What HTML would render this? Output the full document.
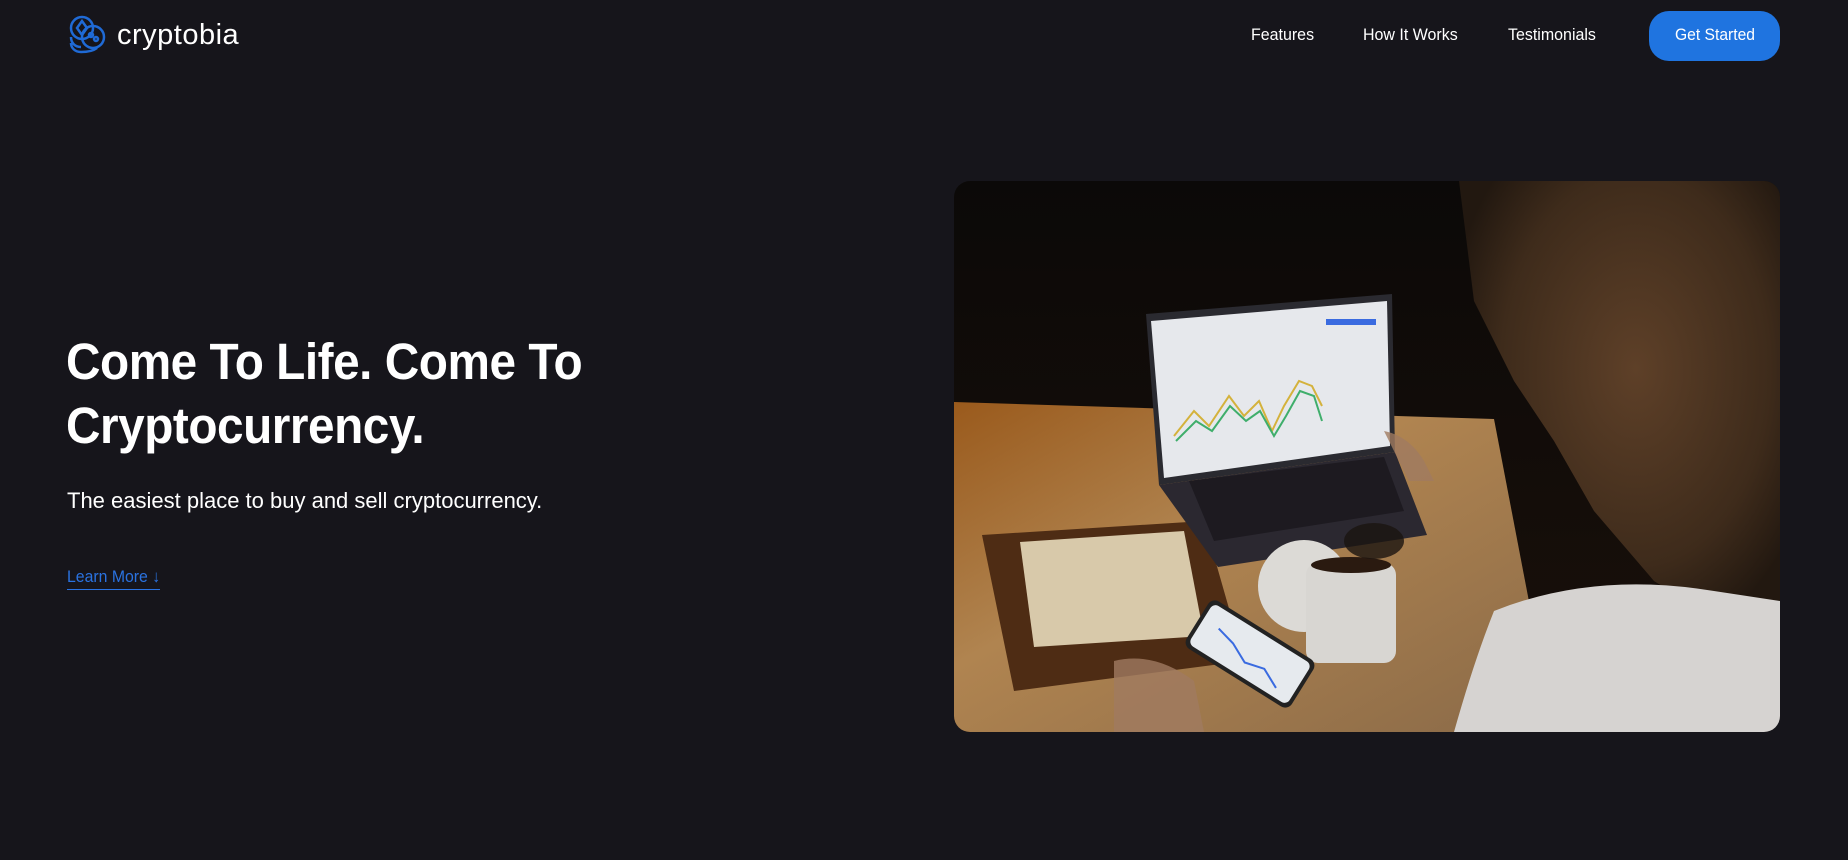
<!DOCTYPE html>
<html><head><meta charset="utf-8"><style>
*{margin:0;padding:0;box-sizing:border-box}
body{width:1848px;height:860px;background:#16151b;font-family:"Liberation Sans",Roboto,sans-serif;color:#fff;position:relative;overflow:hidden}
.logo{position:absolute;left:67px;top:15px;display:flex;align-items:center}
.logo span{font-size:29px;margin-left:8px;letter-spacing:0.5px;color:#fff}
.n{position:absolute;top:25px;font-size:17px;color:#fff;white-space:nowrap;transform-origin:left top;transform:scaleX(0.94)}
.btn{position:absolute;left:1649px;top:11px;width:131px;height:50px;border-radius:20px;background:#1f74e0}
h1{position:absolute;left:66px;top:330px;font-size:51px;line-height:64px;font-weight:bold;letter-spacing:-0.5px;white-space:nowrap;transform-origin:left top;transform:scaleX(0.936)}
.sub{position:absolute;left:67px;top:488px;font-size:22px;white-space:nowrap}
.lm{position:absolute;left:67px;top:567px;font-size:17px;color:#2a72e0;border-bottom:1.5px solid #2a72e0;padding-bottom:2px;white-space:nowrap;transform-origin:left top;transform:scaleX(0.93)}
.img{position:absolute;left:954px;top:181px;width:826px;height:551px;border-radius:16px;overflow:hidden}
</style></head><body>
<div class="logo">
<svg width="42" height="40" viewBox="0 0 42 40" fill="none" stroke="#1f6ad6" stroke-width="2.5">
<circle cx="15" cy="13" r="11"/><path d="M15 6l-5 7 5 7 5-7z"/>
<circle cx="26" cy="22" r="11"/><circle cx="24" cy="20" r="2"/><circle cx="29" cy="24" r="2"/>
<path d="M4 22c0 6 4 10 10 10M4 28c0 5 4 9 10 9M14 37c6 0 12-1 16-4"/>
</svg><span>cryptobia</span></div>
<div class="n" style="left:1251px">Features</div><div class="n" style="left:1363px">How It Works</div><div class="n" style="left:1508px">Testimonials</div>
<div class="btn"></div><div class="n" style="left:1675px;transform:scaleX(0.92)">Get Started</div>
<h1>Come To Life. Come To<br>Cryptocurrency.</h1>
<div class="sub">The easiest place to buy and sell cryptocurrency.</div>
<div class="lm">Learn More ↓</div>
<div class="img">
<svg width="826" height="551" viewBox="0 0 826 551">
<defs>
<linearGradient id="bg" x1="0" y1="0" x2="0" y2="1"><stop offset="0" stop-color="#0b0908"/><stop offset="1" stop-color="#1a100a"/></linearGradient>
<linearGradient id="desk" x1="0" y1="0" x2="1" y2="1"><stop offset="0" stop-color="#9a5a1c"/><stop offset="0.4" stop-color="#b08450"/><stop offset="1" stop-color="#8a6a48"/></linearGradient>
<radialGradient id="hair" cx="0.55" cy="0.4" r="0.6"><stop offset="0" stop-color="#5e4028"/><stop offset="0.7" stop-color="#3e2b1b"/><stop offset="1" stop-color="#221810"/></radialGradient>
</defs>
<rect width="826" height="551" fill="url(#bg)"/>
<path d="M0 221L540 238L600 551L0 551Z" fill="url(#desk)"/>
<path d="M28 354L250 340L290 480L60 510Z" fill="#4e2c14"/>
<path d="M66 361L230 350L250 455L80 466Z" fill="#d8c9aa"/>
<path d="M205 304L441 271L473 354L264 386Z" fill="#2b2830"/>
<path d="M235 300L430 276L450 330L260 360Z" fill="#1d1a20"/>
<path d="M192 133L438 113L441 271L205 304Z" fill="#2a2a30"/>
<path d="M197 140L433 120L436 265L210 297Z" fill="#e6e8ec"/>
<path d="M220 255L240 230L255 245L275 215L290 235L305 220L318 250L330 225L345 200L358 205L368 225" fill="none" stroke="#d4b23c" stroke-width="2"/>
<path d="M222 260L242 240L258 250L276 225L292 240L306 230L320 255L332 235L346 210L360 215L368 240" fill="none" stroke="#3fae6b" stroke-width="2"/>
<rect x="372" y="138" width="50" height="6" fill="#3a6be0"/>
<circle cx="350" cy="405" r="46" fill="#dcdad6"/><rect x="352" y="382" width="90" height="100" rx="12" fill="#d8d6d2"/>
<ellipse cx="397" cy="384" rx="40" ry="8" fill="#2a1a10"/>
<g transform="translate(296 473) rotate(32)"><rect x="-62" y="-28" width="124" height="56" rx="8" fill="#222"/><rect x="-58" y="-24" width="116" height="48" rx="6" fill="#e6eaee"/><path d="M-40 -5L-20 0L0 10L20 5L40 15" stroke="#3a6be0" stroke-width="2" fill="none"/></g>
<ellipse cx="420" cy="360" rx="30" ry="18" fill="#1a1410" opacity="0.8"/>
<path d="M505 0L826 0L826 470L780 450L700 400L640 330L600 260L560 200L520 120Z" fill="url(#hair)"/>
<path d="M540 430Q640 390 760 410L826 420L826 551L500 551Q520 480 540 430Z" fill="#d6d3d1"/>
<path d="M160 480Q200 470 240 500L250 551L160 551Z" fill="#a07a60" opacity="0.8"/>
<path d="M430 250Q455 255 470 280L480 300L455 300Z" fill="#a07a60" opacity="0.8"/>
</svg></div>
</body></html>
